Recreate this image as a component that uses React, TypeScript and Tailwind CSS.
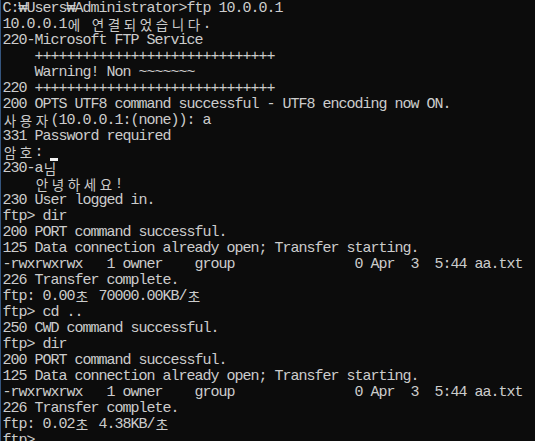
import React from "react";

const plus = "+".repeat(30);
const lines: string[] = [
  "C:₩Users₩Administrator>ftp 10.0.0.1",
  "10.0.0.1에 연결되었습니다.",
  "220-Microsoft FTP Service",
  "    " + plus,
  "    Warning! Non ~~~~~~~",
  "220 " + plus,
  "200 OPTS UTF8 command successful - UTF8 encoding now ON.",
  "사용자(10.0.0.1:(none)): a",
  "331 Password required",
  "암호: \u0001",
  "230-a님",
  "    안녕하세요!",
  "230 User logged in.",
  "ftp> dir",
  "200 PORT command successful.",
  "125 Data connection already open; Transfer starting.",
  "-rwxrwxrwx   1 owner    group               0 Apr  3  5:44 aa.txt",
  "226 Transfer complete.",
  "ftp: 0.00초 70000.00KB/초",
  "ftp> cd ..",
  "250 CWD command successful.",
  "ftp> dir",
  "200 PORT command successful.",
  "125 Data connection already open; Transfer starting.",
  "-rwxrwxrwx   1 owner    group               0 Apr  3  5:44 aa.txt",
  "226 Transfer complete.",
  "ftp: 0.02초 4.38KB/초",
  "ftp> ",
];

const isWide = (c: string) => /[\u1100-\u11ff\u3130-\u318f\uac00-\ud7af]/.test(c);

export default function App() {
  return (
    <div className="w-[535px] h-[441px] overflow-hidden bg-[#0c0c0c] text-[#cccccc] border-l border-[#35557e] pl-[1px]">
      {lines.map((line, i) => (
        <div key={i} className="flex h-[16px] leading-[16px] whitespace-pre">
          {Array.from(line).map((c, j) => {
            if (c === "\u0001") {
              return (
                <span key={j} className="w-[8px] h-[16px] shrink-0 flex flex-col justify-end">
                  <span className="block w-[8px] h-[3px] bg-[#f2f2f2] translate-y-[1px]" />
                </span>
              );
            }
            if (isWide(c)) {
              return (
                <span
                  key={j}
                  className="w-[16px] shrink-0 text-center font-['Noto_Sans_CJK_KR',sans-serif] text-[13.5px]"
                >
                  {c}
                </span>
              );
            }
            return (
              <span
                key={j}
                className="w-[8px] shrink-0 flex justify-center font-['Liberation_Mono',monospace] text-[15px] tracking-[-1px] translate-x-[0.5px] translate-y-[1px]"
              >
                {c}
              </span>
            );
          })}
        </div>
      ))}
    </div>
  );
}
